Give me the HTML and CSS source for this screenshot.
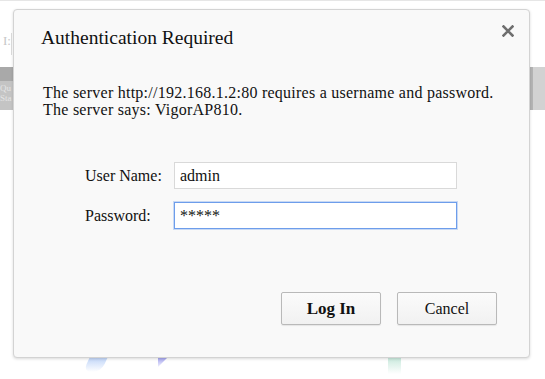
FILE: index.html
```html
<!DOCTYPE html>
<html lang="en">
<head>
    <meta charset="UTF-8">
    <title>Authentication Required</title>
    <link rel="stylesheet" href="styles.css">
</head>
<body class="page">
<div class="backdrop">
    <div class="backdrop-top">
        <span class="backdrop-field">I:</span>
    </div>
    <div class="backdrop-nav">
        <div class="nav-left"><span>Qu</span><span>Sta</span></div>
        <div class="nav-right"></div>
    </div>
    <div class="backdrop-icons">
        <span class="blob blob-blue"></span>
        <span class="blob blob-tri"></span>
        <span class="blob blob-green"></span>
    </div>
</div>

<div class="dialog">
    <div class="dialog-head">
        <h1 class="dialog-title">Authentication Required</h1>
        <button class="dialog-close" title="Close">
            <svg width="12" height="12" viewBox="0 0 12 12">
                <path d="M1.5 1.5 L10.5 10.5 M10.5 1.5 L1.5 10.5" stroke="#6f6f6f" stroke-width="2.6" stroke-linecap="square"/>
            </svg>
        </button>
    </div>
    <div class="dialog-msg">
        The server http://192.168.1.2:80 requires a username and password.<br>
        The server says: VigorAP810.
    </div>
    <div class="dialog-form">
        <label class="form-label" for="user">User Name:</label>
        <input class="form-input" type="text" id="user" value="admin">
        <label class="form-label" for="pass">Password:</label>
        <input class="form-input form-input-focus" type="text" id="pass" value="*****">
    </div>
    <div class="dialog-foot">
        <button class="btn btn-main">Log In</button>
        <button class="btn">Cancel</button>
    </div>
</div>
</body>
</html>
```

FILE: styles.css
```css
* {
    box-sizing: border-box;
}

.page {
    margin: 0;
    width: 545px;
    height: 379px;
    overflow: hidden;
    background: #fff;
    font-family: "Liberation Serif", "Noto Sans CJK TC", serif;
    color: #111;
    position: relative;
}

/* page behind the dialog */
.backdrop-top {
    height: 67px;
    padding: 30px 0 0 0;
    border-top: 1px solid #e6e6e6;
}

.backdrop-field {
    display: inline-block;
    width: 12px;
    height: 22px;
    border-right: 1px solid #ddd;
    color: #c8c8c8;
    font-size: 13px;
    padding-left: 3px;
}

.backdrop-nav {
    display: flex;
    justify-content: space-between;
    height: 43px;
    background: linear-gradient(#d0d0d0, #c9c9c9);
}

.nav-left {
    width: 13px;
    display: flex;
    flex-direction: column;
    background: linear-gradient(#a9a9a9 0, #a9a9a9 14px, #c4c4c4 14px);
    padding-top: 16px;
    font-size: 9px;
    color: #e4e4e4;
    line-height: 10px;
}

.nav-right {
    width: 15px;
    margin-left: auto;
    background: linear-gradient(90deg, #b4b4b4 0, #b4b4b4 3px, #d2d2d2 3px);
}

.backdrop-icons {
    display: flex;
    align-items: flex-start;
    margin-top: 238px;
    height: 30px;
}

.blob {
    display: block;
    height: 22px;
}

.blob-blue {
    width: 18px;
    margin-left: 88px;
    margin-top: 2px;
    background: linear-gradient(#9fbff5, rgba(200, 215, 250, 0));
    transform: skewX(-25deg);
    border-radius: 0 0 8px 8px;
}

.blob-tri {
    width: 9px;
    height: 9px;
    margin-left: 52px;
    margin-top: 10px;
    background: linear-gradient(#a6a6ef, rgba(210, 210, 250, 0.3));
    clip-path: polygon(0 0, 100% 0, 0 100%);
}

.blob-green {
    width: 13px;
    height: 26px;
    margin-left: 221px;
    background: linear-gradient(#a8dcc8, rgba(220, 245, 235, 0));
}

/* dialog */
.dialog {
    position: absolute;
    left: 13px;
    top: 9px;
    width: 517px;
    height: 349px;
    background: #f9f9f9;
    border: 1px solid #d3d3d3;
    border-radius: 4px;
    box-shadow: 0 1px 3px rgba(0, 0, 0, 0.15);
    display: flex;
    flex-direction: column;
    padding: 16px 32px 0 27px;
}

.dialog-head {
    display: flex;
    align-items: flex-start;
}

.dialog-title {
    margin: 0;
    font-weight: normal;
    font-size: 19.5px;
    line-height: 24px;
    flex: 1;
}

.dialog-close {
    border: 0;
    background: none;
    padding: 0;
    margin: -1px -17px 0 0;
    width: 12px;
    height: 12px;
    display: flex;
}

.dialog-msg {
    margin-top: 34px;
    padding-left: 2px;
    font-size: 16px;
    line-height: 17px;
    letter-spacing: 0.25px;
}

.dialog-form {
    display: grid;
    grid-template-columns: 89px 283px;
    grid-row-gap: 13px;
    align-items: center;
    margin-top: 44px;
    padding-left: 44px;
}

.form-label {
    font-size: 16px;
}

.form-input {
    height: 27px;
    border: 1px solid #d9d9d9;
    background: #fff;
    font-family: "Liberation Serif", serif;
    font-size: 16px;
    padding: 0 5px;
    color: #111;
    outline: none;
}

.form-input-focus {
    border-color: #6d9deb;
    box-shadow: 0 0 0 1px rgba(109, 157, 235, 0.35);
}

.dialog-foot {
    display: flex;
    justify-content: flex-end;
    gap: 16px;
    margin-top: 63px;
}

.btn {
    width: 100px;
    height: 33px;
    border: 1px solid #b9b9b9;
    border-radius: 2px;
    background: linear-gradient(#fbfbfb, #f1f1f1);
    font-family: "Liberation Serif", serif;
    font-size: 16px;
    color: #111;
    box-shadow: 0 1px 1px rgba(0, 0, 0, 0.08);
}

.btn-main {
    font-weight: bold;
    font-size: 17px;
}
```
